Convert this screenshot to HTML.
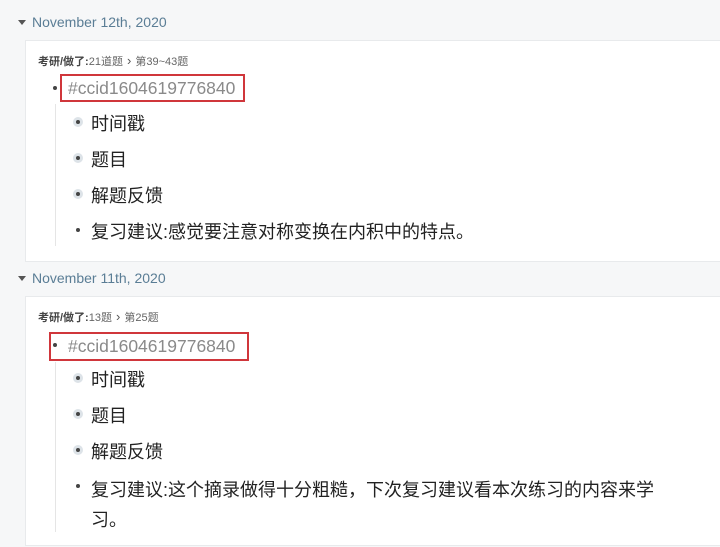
<!DOCTYPE html>
<html><head><meta charset="utf-8"><style>
*{margin:0;padding:0;box-sizing:border-box}
body{width:720px;height:547px;background:#f6f7f8;font-family:"Liberation Sans","Noto Sans CJK SC",sans-serif;position:relative;overflow:hidden;color:#333}
.date{position:absolute;left:18px;font-size:14px;color:#5a7d95}
.date:before{content:"";display:inline-block;border-left:4px solid transparent;border-right:4px solid transparent;border-top:5px solid #555;margin-right:6px;vertical-align:2px}
.card{position:absolute;left:25px;right:0;background:#fff;border:1px solid #e8eaec;border-right:none}
.crumb{position:absolute;left:38px;font-size:11px;color:#666}
.crumb b{color:#444}
.crumb i{font-style:normal;font-size:13px;color:#555;margin:0 4px}
.tag{position:absolute;border:2px solid #d0363b;font-size:17.5px;color:#8a8a8a;padding-left:6px;line-height:24px}
.dot{position:absolute;width:4px;height:4px;border-radius:50%;background:#444}
.guide{position:absolute;left:55px;width:1px;background:#e5e5e5}
.li{position:absolute;left:91px;font-size:18px;color:#222;line-height:22px}
.b{position:absolute;width:10px;height:10px;border-radius:50%;background:#dde3e8}
.b:after{content:"";position:absolute;left:3px;top:3px;width:4px;height:4px;border-radius:50%;background:#444}
.p{position:absolute;width:4px;height:4px;border-radius:50%;background:#444}
</style></head><body>
<div class="date" style="top:14px">November 12th, 2020</div>
<div class="card" style="top:40px;height:222px"></div>
<div class="crumb" style="top:53px"><b>考研/做了:</b>21道题<i>›</i>第39~43题</div>
<div class="dot" style="left:53px;top:86px"></div>
<div class="tag" style="left:60px;top:74px;width:185px;height:28px">#ccid1604619776840</div>
<div class="guide" style="top:104px;height:142px"></div>
<div class="b" style="left:73px;top:117px"></div><div class="li" style="top:113px">时间戳</div>
<div class="b" style="left:73px;top:153px"></div><div class="li" style="top:149px">题目</div>
<div class="b" style="left:73px;top:189px"></div><div class="li" style="top:185px">解题反馈</div>
<div class="p" style="left:76px;top:228px"></div><div class="li" style="top:221px">复习建议:感觉要注意对称变换在内积中的特点。</div>

<div class="date" style="top:270px">November 11th, 2020</div>
<div class="card" style="top:296px;height:250px"></div>
<div class="crumb" style="top:309px"><b>考研/做了:</b>13题<i>›</i>第25题</div>
<div class="dot" style="left:53px;top:343px"></div>
<div class="tag" style="left:49px;top:332px;width:200px;height:29px;padding-left:17px">#ccid1604619776840</div>
<div class="guide" style="top:362px;height:170px"></div>
<div class="b" style="left:73px;top:373px"></div><div class="li" style="top:369px">时间戳</div>
<div class="b" style="left:73px;top:409px"></div><div class="li" style="top:405px">题目</div>
<div class="b" style="left:73px;top:445px"></div><div class="li" style="top:441px">解题反馈</div>
<div class="p" style="left:76px;top:484px"></div><div class="li" style="top:475px;line-height:30px">复习建议:这个摘录做得十分粗糙，下次复习建议看本次练习的内容来学<br>习。</div>
</body></html>
